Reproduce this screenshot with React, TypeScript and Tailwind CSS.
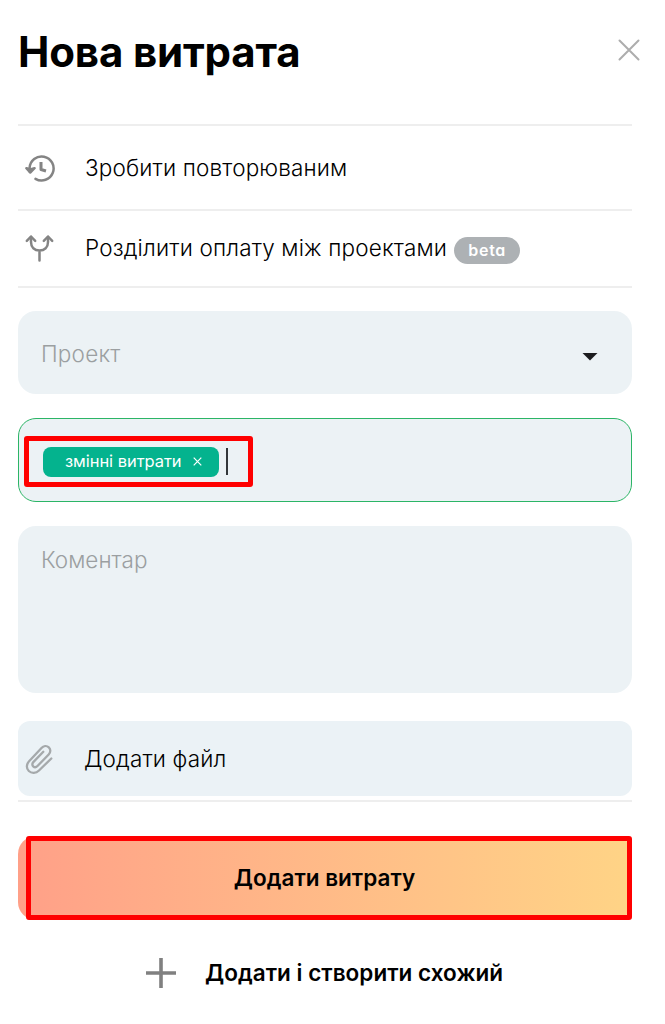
import { useState, type ReactNode } from 'react';

export default function App() {
  const [tags, setTags] = useState(['змінні витрати']);

  return (
    <div className="h-[1024px] w-[665px] overflow-hidden bg-white pl-[18px] pr-[33px] font-['Inter','Liberation_Sans',sans-serif] text-black">
      <header className="flex h-[124px] items-start justify-between pt-[26px]">
        <h1 className="whitespace-nowrap text-[42px] font-bold leading-[52px] tracking-[-0.15px]">Нова витрата</h1>
        <button className="-mr-2 mt-[13px]" aria-label="Закрити">
          <CloseIcon />
        </button>
      </header>

      <OptionRow icon={<RepeatIcon />} className="h-[85px]">
        Зробити повторюваним
      </OptionRow>
      <OptionRow icon={<SplitIcon />} className="h-[77px] pb-[2px]">
        Розділити оплату між проектами
        <span className="ml-[7px] mt-[5px] flex h-[27px] w-[66px] items-center justify-center rounded-full bg-[#adb1b4] text-[16px] font-semibold tracking-[0.7px] text-white [font-feature-settings:'cv11']">
          beta
        </span>
      </OptionRow>

      <div className="border-t-2 border-[#eeeeee] pt-[23px]">
        <div className="flex h-[83px] items-center justify-between rounded-[18px] bg-[#ecf2f5] pl-[23px] pr-[34px] text-[#9b9fa1]">
          <span className="mt-[3px] text-[22.5px] font-light tracking-[0.2px]">Проект</span>
          <span className="mt-[8px] h-2 w-4 bg-[#1c1c1e] [clip-path:polygon(0_0,100%_0,50%_100%)]" />
        </div>

        {/* Category field with the selected tags */}
        <div className="mt-6 h-[84px] rounded-[18px] border border-[#2bb566] bg-[#ecf2f5] pl-[5px] pt-[17px]">
          <div className="flex h-[51px] w-[229px] items-center rounded-[3px] border-5 border-[#ff0000] pl-[14px]">
            {tags.map((tag) => (
              <span
                key={tag}
                className="flex h-[30px] w-[176px] items-center rounded-[8px] bg-[#04b38e] pl-[22px] text-[16.5px] tracking-[-0.05px] text-white"
              >
                <span className="whitespace-nowrap">{tag}</span>
                <button
                  className="ml-[11px]"
                  aria-label="Видалити"
                  onClick={() => setTags(tags.filter((t) => t !== tag))}
                >
                  <svg className="size-[9px]" viewBox="0 0 9 9" stroke="currentColor" strokeWidth="1.2">
                    <path d="M.7.7l7.6 7.6M8.3.7L.7 8.3" />
                  </svg>
                </button>
              </span>
            ))}
            <span className="ml-[7px] h-[27px] w-[2px] bg-[#33373a]" />
          </div>
        </div>

        <div className="mt-6 h-[167px] rounded-[18px] bg-[#ecf2f5] pl-[23px] pt-[20px] text-[22.5px] font-light leading-[28px] text-[#9b9fa1]">
          Коментар
        </div>
      </div>

      <div className="mt-7 border-b-2 border-[#eeeeee] pb-1">
        <div className="flex h-[75px] items-center rounded-[12px] bg-[#ebf2f6] pl-[7px]">
          <span className="w-[59px]">
            <ClipIcon />
          </span>
          <span className="text-[22.5px] font-light tracking-[0.15px]">Додати файл</span>
        </div>
      </div>

      <button className="mt-[34px] block h-[84px] w-full rounded-[18px] bg-linear-to-r from-[#ffa088] to-[#ffd486] pl-2">
        <span className="flex h-full items-center justify-center rounded-[3px] border-5 border-[#ff0000] pr-[9px] text-[22.5px] font-semibold">
          Додати витрату
        </span>
      </button>

      <button className="ml-[128px] mt-[37px] flex h-[31px] items-center whitespace-nowrap text-[22.5px] font-semibold tracking-[0.03px]">
        <svg className="mr-[29px] size-[30px]" viewBox="0 0 30 30" stroke="#808080" strokeWidth="3.6">
          <path d="M15 0v30M0 15h30" />
        </svg>
        Додати і створити схожий
      </button>
    </div>
  );
}

function OptionRow({
  icon,
  className,
  children,
}: {
  icon: ReactNode;
  className: string;
  children: ReactNode;
}) {
  return (
    <div className={`flex items-center border-t-2 border-[#eeeeee] pl-[7px] ${className}`}>
      <span className="w-[60px] shrink-0">{icon}</span>
      <span className="flex items-center whitespace-nowrap text-[22.5px] font-light tracking-[0.16px]">{children}</span>
    </div>
  );
}

function CloseIcon() {
  return (
    <svg className="size-[22px]" viewBox="0 0 22 22" stroke="#adadad" strokeWidth="2" strokeLinecap="round">
      <path d="M1.5 1.5l19 19M20.5 1.5l-19 19" />
    </svg>
  );
}

function RepeatIcon() {
  return (
    <svg className="h-[28px] w-[30px]" viewBox="0 0 30 28" fill="none" stroke="#848484" strokeWidth="2.5" strokeLinecap="round" strokeLinejoin="round">
      <path d="M4.6 17.5V14A12 12 0 1 1 10.5 24.8" />
      <path d="M1.4 14.2l3.800 4.300 4.300-4.300-4.100 1.300z" fill="#848484" />
      <path d="M16 8v7.500l5 1.500" strokeWidth="3" strokeLinecap="butt" />
    </svg>
  );
}

function SplitIcon() {
  return (
    <svg className="h-[28px] w-[30px]" viewBox="0 0 30 28" fill="none" stroke="#848484" strokeWidth="2.5" strokeLinecap="round" strokeLinejoin="round">
      <path d="M1.8 6.800L6 2.500l4.200 4.300M18.800 6.800L23 2.500l4.200 4.300" />
      <path d="M6 3v5c0 5.500 3.500 8.500 8.500 8.500S23 13.500 23 8V3M14.500 16.500v10" />
    </svg>
  );
}

function ClipIcon() {
  return (
    <svg className="h-[30px] w-[28px]" viewBox="0 0 28 30" fill="none" stroke="#a5a9ab" strokeWidth="2.3" strokeLinecap="round" strokeLinejoin="round">
      <path d="M26.300 14.500L14 26.500c-3 3-7.500 3-10.200.5s-2.500-6.800.3-9.800L16.500 4c2-2.200 5.200-2.600 7.300-.7s2 5-.1 7.200L12.500 22c-1.300 1.300-3.100 1.400-4.300.3s-1.100-2.900.1-4.200l10-10.300" />
    </svg>
  );
}
